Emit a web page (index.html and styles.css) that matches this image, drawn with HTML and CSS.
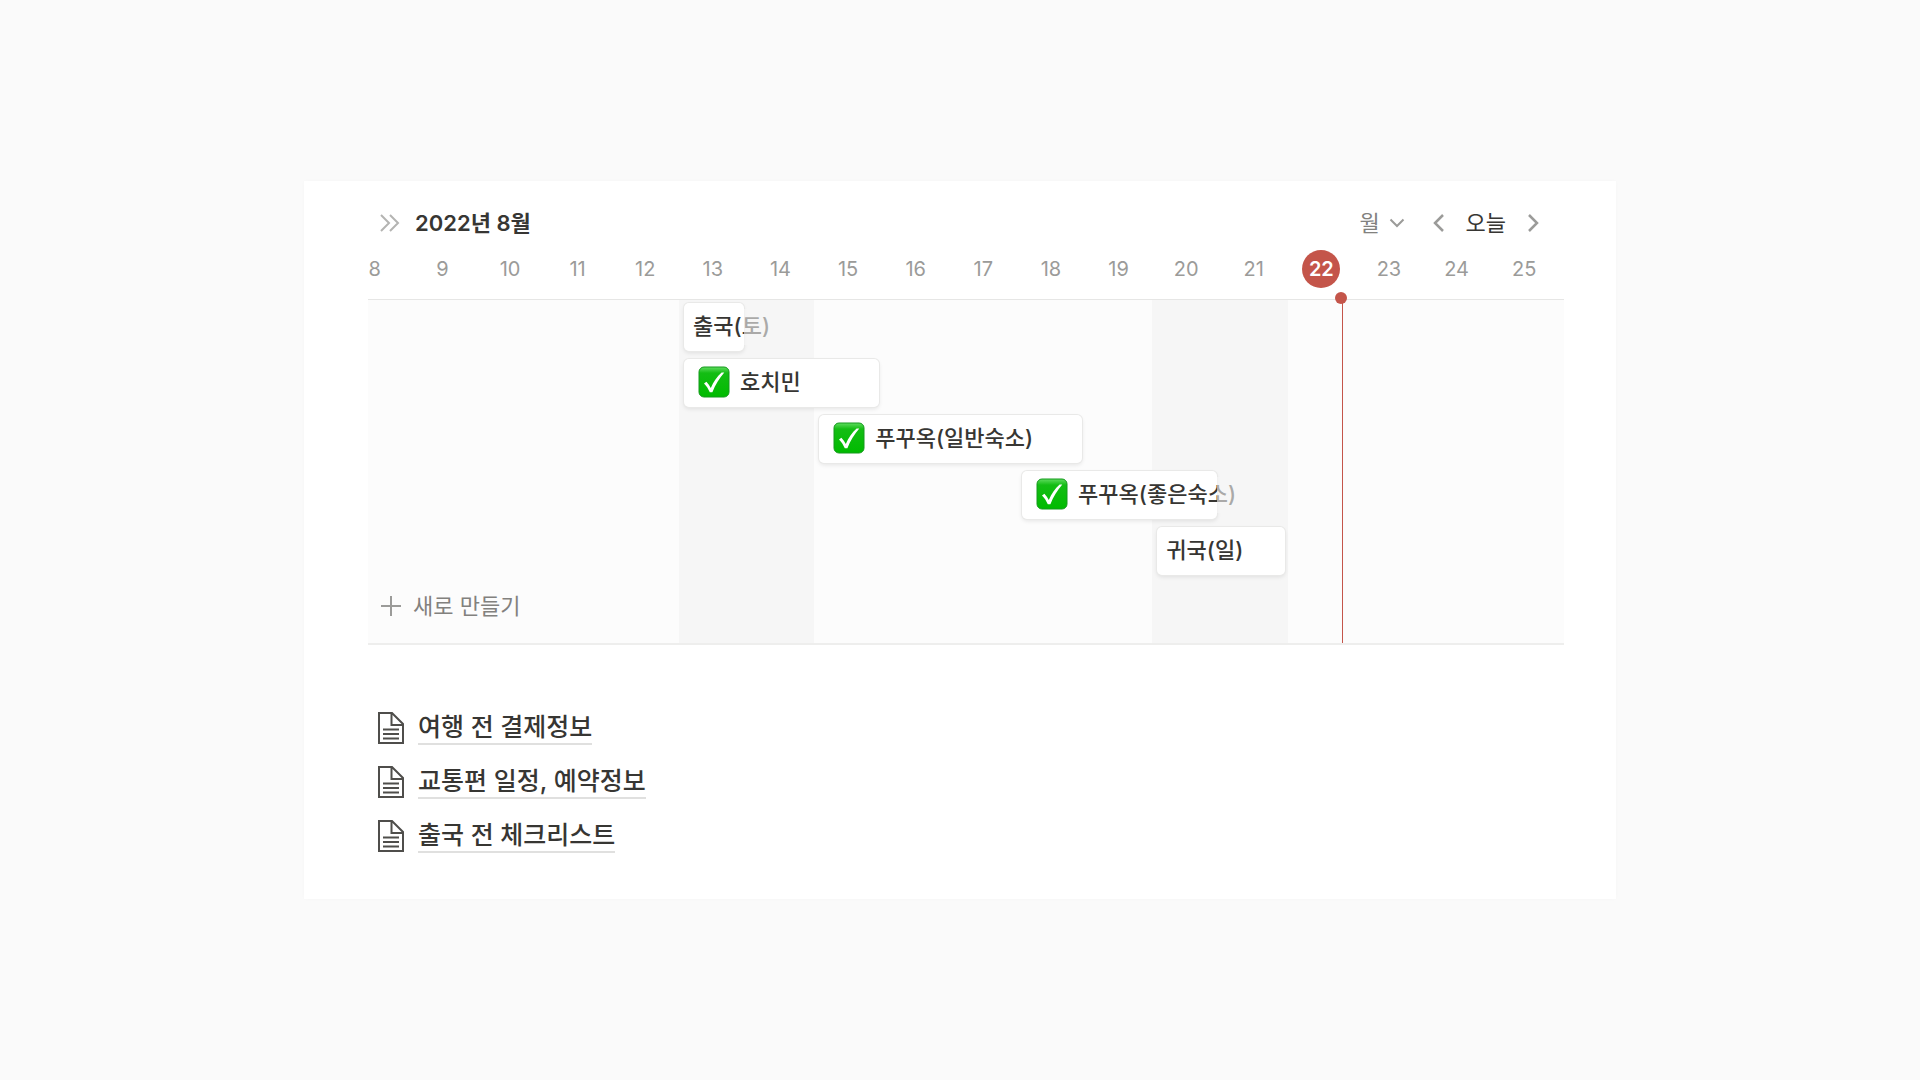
FILE: index.html
```
<!DOCTYPE html>
<html lang="ko">
<head>
<meta charset="utf-8">
<meta name="viewport" content="width=device-width, initial-scale=1">
<title>2022년 8월</title>
<link rel="stylesheet" href="styles.css">
</head>
<body>
<svg class="sprite" aria-hidden="true">
  <defs>
    <linearGradient id="check-gloss" x1="0" y1="0" x2="0" y2="1">
      <stop offset="0" stop-color="#5fdc5f"/>
      <stop offset="0.2" stop-color="#14bd14"/>
      <stop offset="1" stop-color="#00bb00"/>
    </linearGradient>
  </defs>
  <symbol id="check" viewBox="0 0 32 32">
    <rect x="1" y="1" width="30" height="30" rx="5" fill="url(#check-gloss)" stroke="#159a1c" stroke-width="1"/>
    <path d="M6 17.500l2.400-1.700c1.800 2 3.300 4 4.400 6.300C15.400 16 19 10.700 23.600 6.600h2.700C21.300 12.500 17.300 19 14.400 26.300h-2.600C10.400 23 8.500 20 6 17.500z" fill="#fff"/>
  </symbol>
  <symbol id="page" viewBox="0 0 26 32">
    <path d="M1 1h13l11 11v19H1zM13.500 1v12H25M5 17.500h16M5 22h16M5 26.500h16" fill="none" stroke="currentColor" stroke-width="2"/>
  </symbol>
</svg>
<main class="card">
  <section class="timeline">
    <header class="toolbar">
      <button class="icon-button" type="button" aria-label="펼치기">
        <svg class="icon-expand" width="20" height="18" viewBox="0 0 20 18"><path d="M1 1l8 8-8 8M10 1l8 8-8 8"/></svg>
      </button>
      <h1 class="month">2022년 8월</h1>
      <label class="scale">
        <select class="scale-select" aria-label="보기 단위"><option>월</option></select>
        <svg class="icon-down" width="16" height="10" viewBox="0 0 16 10"><path d="M1.500 1.500L8 8l6.500-6.500"/></svg>
      </label>
      <nav class="pager">
        <button class="icon-button" type="button" aria-label="이전">
          <svg class="icon-step" width="12" height="18" viewBox="0 0 12 18"><path d="M10 1L2 9l8 8"/></svg>
        </button>
        <button class="today-button" type="button">오늘</button>
        <button class="icon-button" type="button" aria-label="다음">
          <svg class="icon-step" width="12" height="18" viewBox="0 0 12 18"><path d="M2 1l8 8-8 8"/></svg>
        </button>
      </nav>
    </header>
    <ol class="days">
      <li>8</li><li>9</li><li>10</li><li>11</li><li>12</li><li>13</li><li>14</li><li>15</li><li>16</li>
      <li>17</li><li>18</li><li>19</li><li>20</li><li>21</li><li><span class="today">22</span></li><li>23</li><li>24</li><li>25</li>
    </ol>
    <div class="chart">
      <div class="rows">
        <div class="weekend first-weekend"></div>
        <div class="weekend second-weekend"></div>
        <div class="now"></div>
        <div class="bar departure spills"><span>출국(토)</span></div>
        <div class="bar hochiminh"><svg class="check"><use href="#check"/></svg><span>호치민</span></div>
        <div class="bar phuquoc"><svg class="check"><use href="#check"/></svg><span>푸꾸옥(일반숙소)</span></div>
        <div class="bar resort spills"><svg class="check"><use href="#check"/></svg><span>푸꾸옥(좋은숙소)</span></div>
        <div class="bar homecoming"><span>귀국(일)</span></div>
        <button class="new-item" type="button">
          <svg class="icon-plus" width="22" height="22" viewBox="0 0 22 22"><path d="M11 1v20M1 11h20"/></svg>
          새로 만들기
        </button>
      </div>
    </div>
  </section>
  <ul class="pages">
    <li><a class="page-link" href="#payment"><svg class="page-icon"><use href="#page"/></svg><span>여행 전 결제정보</span></a></li>
    <li><a class="page-link" href="#transport"><svg class="page-icon"><use href="#page"/></svg><span>교통편 일정, 예약정보</span></a></li>
    <li><a class="page-link" href="#checklist"><svg class="page-icon"><use href="#page"/></svg><span>출국 전 체크리스트</span></a></li>
  </ul>
</main>
</body>
</html>
```
FILE: styles.css
```
* {
  box-sizing: border-box;
}

body {
  min-height: 100vh;
  margin: 0;
  padding: 24px;
  display: flex;
  align-items: center;
  justify-content: center;
  background: #fafafa;
  color: #373633;
  font-family: Inter, "Noto Sans CJK KR", sans-serif;
  font-size: 22px;
  line-height: 32px;
}

button,
select {
  margin: 0;
  padding: 0;
  border: 0;
  background: none;
  color: inherit;
  font: inherit;
  cursor: pointer;
}

ol,
ul {
  margin: 0;
  padding: 0;
  list-style: none;
}

svg {
  display: block;
  flex: none;
  fill: none;
  stroke: currentColor;
}

.sprite {
  position: absolute;
  width: 0;
  height: 0;
}

.card {
  width: 100%;
  max-width: 1312px;
  padding: 26px 52px 46px 64px;
  background: #fff;
  box-shadow: 0 0 4px rgba(0, 0, 0, 0.02);
}

/* Toolbar */
.toolbar {
  display: flex;
  align-items: center;
  padding: 0 25px 0 12px;
}

.icon-button {
  display: flex;
  align-items: center;
  height: 32px;
  color: #9b9b99;
}

.icon-expand {
  color: #b4b4b2;
  stroke-width: 2;
}

.month {
  margin: 0 auto 0 15px;
  font-size: 22px;
  font-weight: 600;
}

.scale {
  display: flex;
  align-items: center;
  gap: 8px;
  color: #82817e;
}

.scale-select {
  appearance: none;
}

.icon-down {
  color: #9b9b99;
  stroke-width: 2;
}

.pager {
  display: flex;
  align-items: center;
  gap: 21px;
  margin-left: 28px;
}

.icon-step {
  stroke-width: 2.5;
}

/* The first day starts left of the chart edge, so both grids begin 27px early. */
.days,
.rows {
  display: grid;
  grid-template-columns: repeat(18, minmax(0, 1fr));
  margin-left: -27px;
  padding-right: 6px;
}

.days {
  height: 60px;
  align-items: center;
  color: #9b9b99;
  font-size: 20px;
  text-align: center;
}

.today {
  display: grid;
  place-items: center;
  width: 38px;
  height: 38px;
  margin: 0 auto;
  border-radius: 50%;
  background: #c4554a;
  color: #fff;
  font-weight: 600;
}

/* Chart */
.chart {
  border-top: 1px solid #e6e6e5;
  border-bottom: 2px solid #eeeeed;
  background: #fcfcfc;
}

.rows {
  position: relative;
  grid-template-rows: 3px repeat(6, 56px) 4px;
}

.weekend {
  grid-row: 1 / -1;
  background: #f6f6f6;
}

.first-weekend {
  grid-column: 6 / 8;
}

.second-weekend {
  grid-column: 13 / 15;
}

.now {
  position: relative;
  grid-area: 1 / 15 / -1 / 16;
  width: 82%;
  border-right: 1px solid #c4554a;
}

.now::before {
  content: "";
  position: absolute;
  top: -8px;
  right: -5px;
  width: 12px;
  height: 12px;
  border-radius: 50%;
  background: #c4554a;
}

.bar {
  position: relative;
  display: flex;
  align-items: center;
  gap: 10px;
  height: 48px;
  margin: 0 3px 0 5px;
  padding: 0 9px 2px;
  border-radius: 5px;
  background: #fff;
  box-shadow: 0 0 0 1px #e9e9e8, 0 2px 4px rgba(15, 15, 15, 0.1);
  font-weight: 500;
  white-space: nowrap;
}

/* Fades the part of a title that runs past the end of its bar. */
.spills::after {
  content: "";
  position: absolute;
  top: 6px;
  bottom: 6px;
  left: 100%;
  width: 40px;
  background: rgba(246, 246, 246, 0.6);
}

.check {
  width: 32px;
  height: 32px;
  margin-left: 5px;
  stroke: none;
}

.departure {
  grid-area: 2 / 6 / 3 / 7;
}

.hochiminh {
  grid-area: 3 / 6 / 4 / 9;
}

.phuquoc {
  grid-area: 4 / 8 / 5 / 12;
}

.resort {
  grid-area: 5 / 11 / 6 / 14;
}

.homecoming {
  grid-area: 6 / 13 / 7 / 15;
}

.new-item {
  grid-area: 7 / 1 / 8 / 6;
  display: flex;
  align-items: center;
  gap: 11px;
  height: 48px;
  padding: 0 0 2px 39px;
  color: #82817e;
}

.icon-plus {
  color: #9b9b99;
  stroke-width: 2;
}

/* Linked pages */
.pages {
  display: grid;
  gap: 20px;
  margin-top: 66px;
  padding-left: 10px;
}

.page-link {
  display: flex;
  align-items: center;
  gap: 14px;
  width: fit-content;
  color: inherit;
  font-size: 25px;
  font-weight: 500;
  line-height: 32px;
  text-decoration: none;
}

.page-link span {
  border-bottom: 2px solid #e0e0df;
}

.page-icon {
  width: 26px;
  height: 32px;
  color: #4f4e4b;
}
```
